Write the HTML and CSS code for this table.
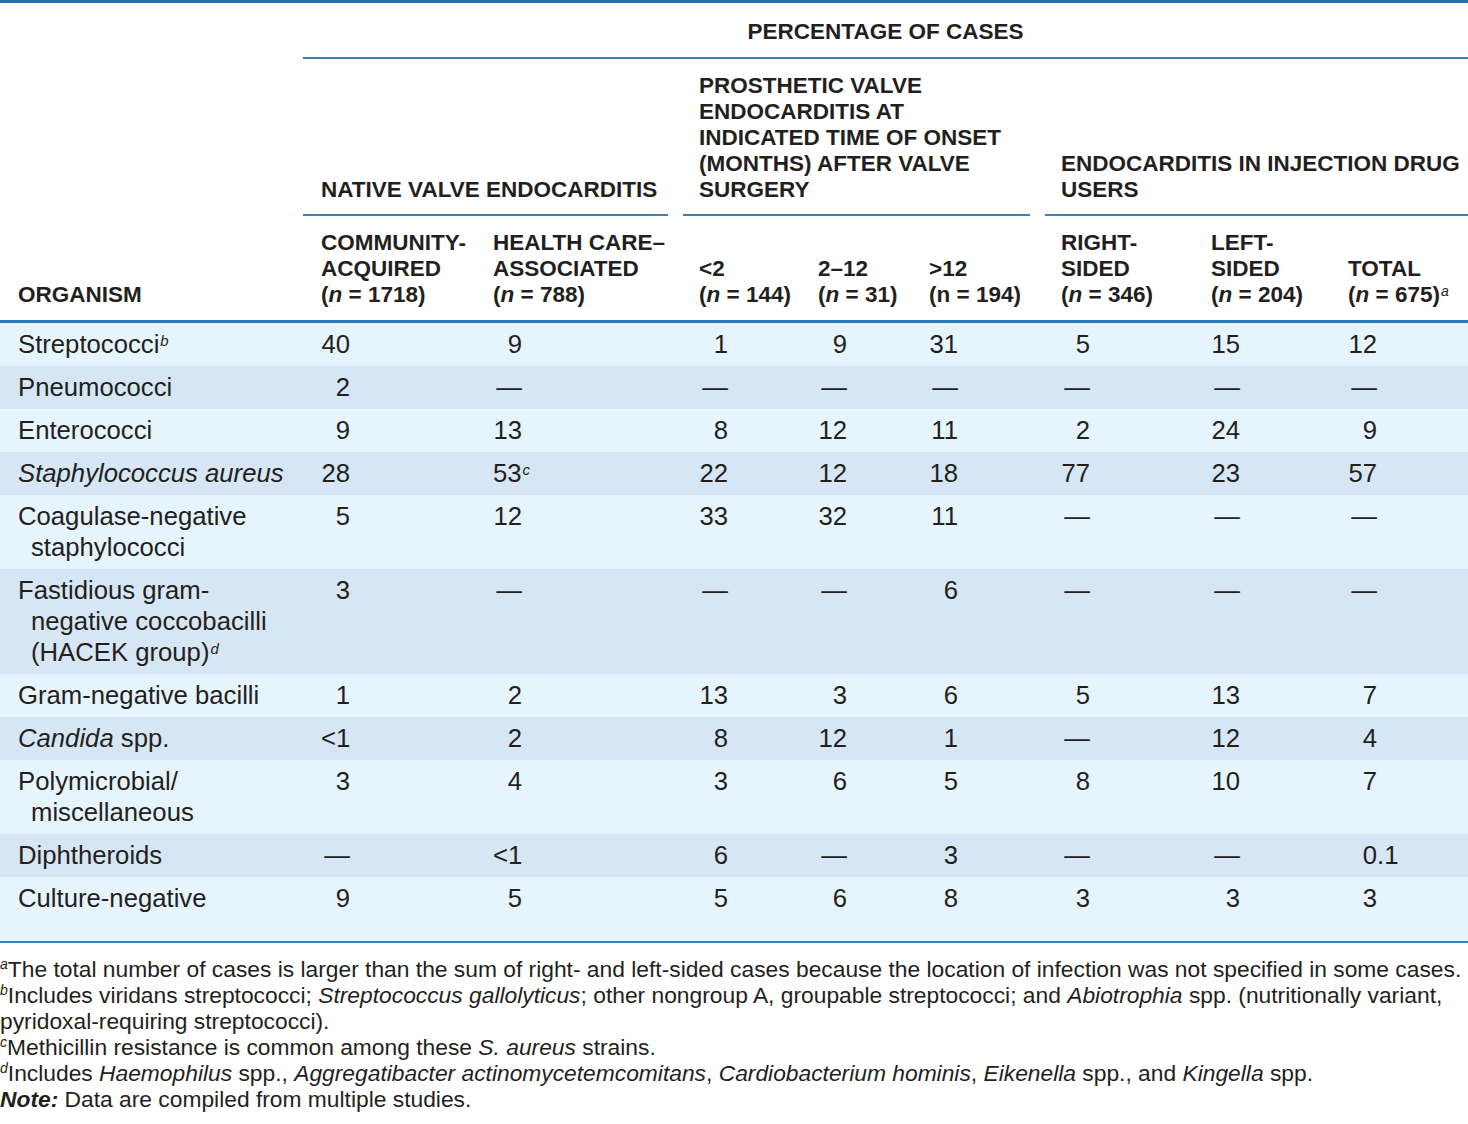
FILE: index.html
```html
<!DOCTYPE html>
<html lang="en">
<head>
<meta charset="utf-8">
<title>Organisms causing endocarditis</title>
<link rel="stylesheet" href="styles.css">
</head>
<body>
<table class="tbl">
  <colgroup>
    <col class="c-org"><col class="c-com"><col class="c-hca"><col class="c-p1"><col class="c-p2"><col class="c-p3"><col class="c-rs"><col class="c-ls"><col class="c-tot">
  </colgroup>
  <thead>
    <tr>
      <th class="h-org" rowspan="3">ORGANISM</th>
      <th class="h-pct" colspan="8">PERCENTAGE OF CASES</th>
    </tr>
    <tr>
      <th class="h-grp" colspan="2"><div class="grp grp-first">NATIVE VALVE ENDOCARDITIS</div></th>
      <th class="h-grp" colspan="3"><div class="grp">PROSTHETIC VALVE<br>ENDOCARDITIS AT<br>INDICATED TIME OF ONSET<br>(MONTHS) AFTER VALVE<br>SURGERY</div></th>
      <th class="h-grp" colspan="3"><div class="grp grp-last">ENDOCARDITIS IN INJECTION DRUG<br>USERS</div></th>
    </tr>
    <tr class="h-sub">
      <th>COMMUNITY-<br>ACQUIRED<br>(<i>n</i> = 1718)</th>
      <th>HEALTH CARE–<br>ASSOCIATED<br>(<i>n</i> = 788)</th>
      <th>&lt;2<br>(<i>n</i> = 144)</th>
      <th>2–12<br>(<i>n</i> = 31)</th>
      <th>&gt;12<br>(n = 194)</th>
      <th>RIGHT-<br>SIDED<br>(<i>n</i> = 346)</th>
      <th>LEFT-<br>SIDED<br>(<i>n</i> = 204)</th>
      <th>TOTAL<br>(<i>n</i> = 675)<sup class="fn">a</sup></th>
    </tr>
  </thead>
  <tbody>
    <tr class="odd">
      <td class="org">Streptococci<sup class="fn">b</sup></td>
      <td><span class="n">40</span></td><td><span class="n">9</span></td><td><span class="n">1</span></td><td><span class="n">9</span></td><td><span class="n">31</span></td><td><span class="n">5</span></td><td><span class="n">15</span></td><td><span class="n">12</span></td>
    </tr>
    <tr class="even">
      <td class="org">Pneumococci</td>
      <td><span class="n">2</span></td><td><span class="n">—</span></td><td><span class="n">—</span></td><td><span class="n">—</span></td><td><span class="n">—</span></td><td><span class="n">—</span></td><td><span class="n">—</span></td><td><span class="n">—</span></td>
    </tr>
    <tr class="odd">
      <td class="org">Enterococci</td>
      <td><span class="n">9</span></td><td><span class="n">13</span></td><td><span class="n">8</span></td><td><span class="n">12</span></td><td><span class="n">11</span></td><td><span class="n">2</span></td><td><span class="n">24</span></td><td><span class="n">9</span></td>
    </tr>
    <tr class="even">
      <td class="org"><i>Staphylococcus aureus</i></td>
      <td><span class="n">28</span></td><td><span class="n">53<sup class="fn hang">c</sup></span></td><td><span class="n">22</span></td><td><span class="n">12</span></td><td><span class="n">18</span></td><td><span class="n">77</span></td><td><span class="n">23</span></td><td><span class="n">57</span></td>
    </tr>
    <tr class="odd">
      <td class="org">Coagulase-negative staphylococci</td>
      <td><span class="n">5</span></td><td><span class="n">12</span></td><td><span class="n">33</span></td><td><span class="n">32</span></td><td><span class="n">11</span></td><td><span class="n">—</span></td><td><span class="n">—</span></td><td><span class="n">—</span></td>
    </tr>
    <tr class="even">
      <td class="org"><span class="ln">Fastidious gram-</span><span class="ln">negative coccobacilli</span> <span class="ln">(HACEK group)<sup class="fn">d</sup></span></td>
      <td><span class="n">3</span></td><td><span class="n">—</span></td><td><span class="n">—</span></td><td><span class="n">—</span></td><td><span class="n">6</span></td><td><span class="n">—</span></td><td><span class="n">—</span></td><td><span class="n">—</span></td>
    </tr>
    <tr class="odd">
      <td class="org">Gram-negative bacilli</td>
      <td><span class="n">1</span></td><td><span class="n">2</span></td><td><span class="n">13</span></td><td><span class="n">3</span></td><td><span class="n">6</span></td><td><span class="n">5</span></td><td><span class="n">13</span></td><td><span class="n">7</span></td>
    </tr>
    <tr class="even">
      <td class="org"><i>Candida</i> spp.</td>
      <td><span class="n">&lt;1</span></td><td><span class="n">2</span></td><td><span class="n">8</span></td><td><span class="n">12</span></td><td><span class="n">1</span></td><td><span class="n">—</span></td><td><span class="n">12</span></td><td><span class="n">4</span></td>
    </tr>
    <tr class="odd">
      <td class="org">Polymicrobial/ miscellaneous</td>
      <td><span class="n">3</span></td><td><span class="n">4</span></td><td><span class="n">3</span></td><td><span class="n">6</span></td><td><span class="n">5</span></td><td><span class="n">8</span></td><td><span class="n">10</span></td><td><span class="n">7</span></td>
    </tr>
    <tr class="even">
      <td class="org">Diphtheroids</td>
      <td><span class="n">—</span></td><td><span class="n">&lt;1</span></td><td><span class="n">6</span></td><td><span class="n">—</span></td><td><span class="n">3</span></td><td><span class="n">—</span></td><td><span class="n">—</span></td><td><span class="n">0<span class="hang">.1</span></span></td>
    </tr>
    <tr class="odd last">
      <td class="org">Culture-negative</td>
      <td><span class="n">9</span></td><td><span class="n">5</span></td><td><span class="n">5</span></td><td><span class="n">6</span></td><td><span class="n">8</span></td><td><span class="n">3</span></td><td><span class="n">3</span></td><td><span class="n">3</span></td>
    </tr>
  </tbody>
</table>
<div class="notes">
  <p><sup class="fn">a</sup>The total number of cases is larger than the sum of right- and left-sided cases because the location of infection was not specified in some cases.</p>
  <p><sup class="fn">b</sup>Includes viridans streptococci; <i>Streptococcus gallolyticus</i>; other nongroup A, groupable streptococci; and <i>Abiotrophia</i> spp. (nutritionally variant,<br>pyridoxal-requiring streptococci).</p>
  <p><sup class="fn">c</sup>Methicillin resistance is common among these <i>S. aureus</i> strains.</p>
  <p><sup class="fn">d</sup>Includes <i>Haemophilus</i> spp., <i>Aggregatibacter actinomycetemcomitans</i>, <i>Cardiobacterium hominis</i>, <i>Eikenella</i> spp., and <i>Kingella</i> spp.</p>
  <p><b><i>Note:</i></b> Data are compiled from multiple studies.</p>
</div>
</body>
</html>
```
FILE: styles.css
```css
html, body {
  margin: 0;
  padding: 0;
  background: #ffffff;
}
body {
  width: 1468px;
  font-family: "Liberation Sans", Arial, sans-serif;
  color: #231f20;
}
.tbl {
  width: 1468px;
  table-layout: fixed;
  border-collapse: separate;
  border-spacing: 0;
}
.c-org { width: 303px; }
.c-com { width: 172px; }
.c-hca { width: 206px; }
.c-p1 { width: 119px; }
.c-p2 { width: 111px; }
.c-p3 { width: 132px; }
.c-rs { width: 150px; }
.c-ls { width: 137px; }
.c-tot { width: 138px; }

.tbl th {
  font-size: 22.5px;
  line-height: 26px;
  font-weight: bold;
  text-align: left;
  vertical-align: bottom;
  white-space: nowrap;
  padding: 0 0 0 18px;
}
.tbl th i { font-weight: bold; }
.h-org {
  border-top: 3px solid #2270ad;
  border-bottom: 3px solid #2a78b4;
  padding-bottom: 12px !important;
}
.tbl th.h-pct {
  border-top: 3px solid #2270ad;
  border-bottom: 2px solid #3a83bd;
  text-align: center;
  padding: 16px 0 12px 0;
}
.tbl th.h-grp {
  padding: 14px 0 0 0;
}
.grp {
  border-bottom: 2px solid #3a83bd;
  margin: 0 13px 0 2px;
  padding: 0 0 11px 16px;
}
.grp-first {
  margin-left: 0;
  padding-left: 18px;
}
.grp-last {
  margin-right: 0;
}
.h-sub th {
  padding-top: 14px;
  padding-bottom: 12px;
  border-bottom: 3px solid #2a78b4;
}

.tbl td {
  font-size: 25.7px;
  line-height: 31px;
  padding: 6px 0 6px 18px;
  vertical-align: top;
}
.tbl td.org {
  padding-left: 31px;
  text-indent: -13px;
  padding-right: 4px;
}
.ln {
  white-space: nowrap;
}
.odd td { background: #e6f4fd; }
.even td { background: #d6e6f5; }
.last td {
  padding-bottom: 27px;
  border-bottom: 2px solid #3a83bd;
}
.n {
  display: inline-block;
  width: 29px;
  text-align: right;
  white-space: nowrap;
}
.hang {
  display: inline-block;
  width: 0;
  overflow: visible;
  text-align: left;
}
.fn {
  font-size: 0.58em;
  font-style: italic;
  font-weight: normal;
  line-height: 0;
  vertical-align: 0.45em;
  margin-left: 1px;
}
.tbl th .fn { font-size: 14px; }

.notes {
  padding-top: 13px;
  font-size: 22.8px;
  line-height: 26px;
}
.notes p {
  margin: 0;
  white-space: nowrap;
}
.notes .fn {
  font-size: 14px;
  vertical-align: 0.55em;
  margin-left: 0;
}
```
